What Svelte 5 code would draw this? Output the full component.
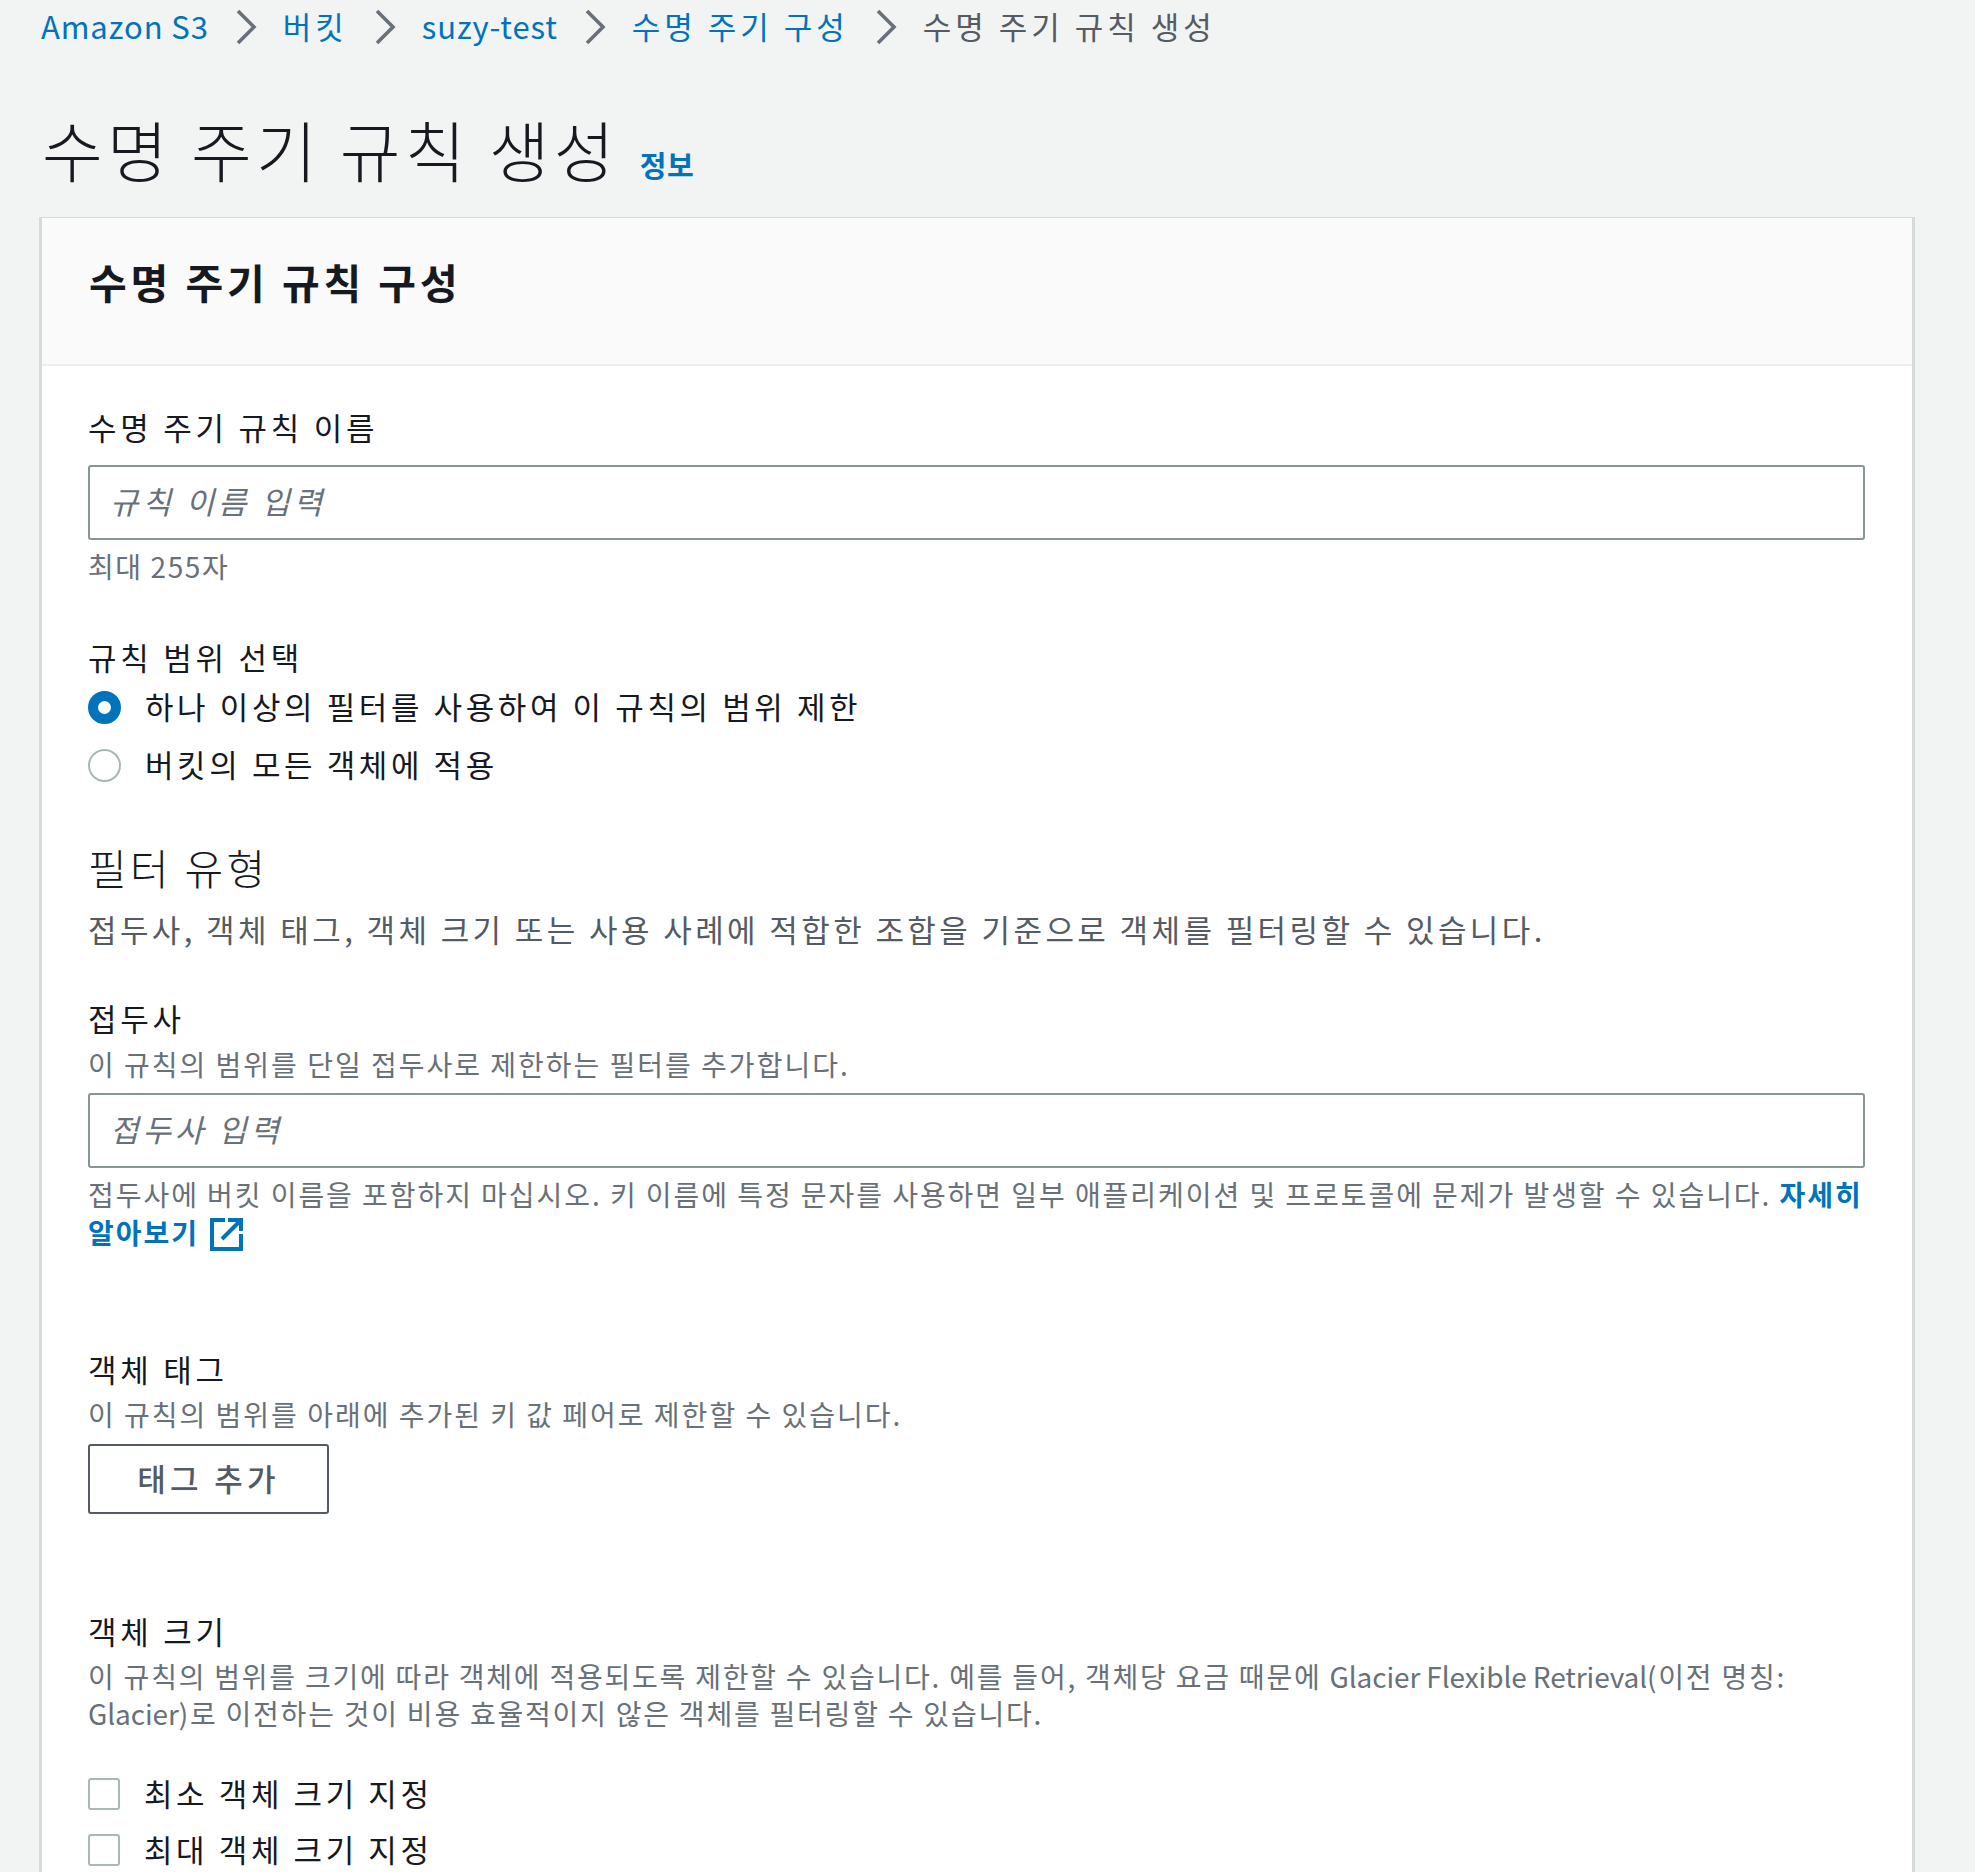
<script lang="ts">
    const crumbs = [
        { text: "Amazon S3", latin: true },
        { text: "버킷", latin: false },
        { text: "suzy-test", latin: true },
        { text: "수명 주기 구성", latin: false },
    ];
</script>

<div class="page">
    <nav class="crumbs">
        {#each crumbs as crumb}
            <a href="#top" class:latin={crumb.latin}>{crumb.text}</a>
            <svg class="sep" viewBox="0 0 22 36" width="22" height="36">
                <path d="M3 2 L19 18 L3 34" fill="none" stroke="#687078" stroke-width="3.6" />
            </svg>
        {/each}
        <span class="current">수명 주기 규칙 생성</span>
    </nav>

    <header class="title">
        <h1>수명 주기 규칙 생성</h1>
        <a class="info" href="#top">정보</a>
    </header>

    <section class="card">
        <div class="card-head">
            <h2>수명 주기 규칙 구성</h2>
        </div>
        <div class="card-body">
            <label class="label" for="name">수명 주기 규칙 이름</label>
            <input id="name" class="field" placeholder="규칙 이름 입력" />
            <p class="hint name-hint">최대 255자</p>

            <p class="label scope">규칙 범위 선택</p>
            <div class="option first">
                <span class="radio on"></span>
                <span class="opt-text">하나 이상의 필터를 사용하여 이 규칙의 범위 제한</span>
            </div>
            <div class="option second">
                <span class="radio"></span>
                <span class="opt-text">버킷의 모든 객체에 적용</span>
            </div>

            <h3>필터 유형</h3>
            <p class="lead">접두사, 객체 태그, 객체 크기 또는 사용 사례에 적합한 조합을 기준으로 객체를 필터링할 수 있습니다.</p>

            <label class="label prefix" for="prefix">접두사</label>
            <p class="hint sub">이 규칙의 범위를 단일 접두사로 제한하는 필터를 추가합니다.</p>
            <input id="prefix" class="field prefix-field" placeholder="접두사 입력" />
            <p class="hint help">
                접두사에 버킷 이름을 포함하지 마십시오. 키 이름에 특정 문자를 사용하면 일부 애플리케이션 및 프로토콜에 문제가 발생할 수 있습니다.
                <a href="#top">자세히</a><br />
                <a href="#top">알아보기
                    <svg class="ext" viewBox="0 0 33 33" width="33" height="33">
                        <path d="M15 2 H2 V31 H31 V16 M18 2 H31 V13 M30 3 L12 21" fill="none" stroke="#0073bb" stroke-width="4" />
                    </svg>
                </a>
            </p>

            <p class="label tags">객체 태그</p>
            <p class="hint tags-hint">이 규칙의 범위를 아래에 추가된 키 값 페어로 제한할 수 있습니다.</p>
            <button class="add"><span>태그 추가</span></button>

            <p class="label size">객체 크기</p>
            <p class="hint sub multi">이 규칙의 범위를 크기에 따라 객체에 적용되도록 제한할 수 있습니다. 예를 들어, 객체당 요금 때문에 <span class="plain">Glacier Flexible Retrieval</span>(이전 명칭: <span class="plain">Glacier</span>)로 이전하는 것이 비용 효율적이지 않은 객체를 필터링할 수 있습니다.</p>
            <div class="option check-first">
                <span class="check"></span>
                <span class="opt-text">최소 객체 크기 지정</span>
            </div>
            <div class="option check-second">
                <span class="check"></span>
                <span class="opt-text">최대 객체 크기 지정</span>
            </div>
        </div>
    </section>
</div>

<style>
    :global(body) {
        margin: 0;
        background: #f2f3f3;
    }

    .page {
        height: 1872px;
        overflow: hidden;
        padding: 0 60px 0 39px;
        box-sizing: border-box;
        font-family: "Noto Sans CJK KR", "Open Sans", sans-serif;
        color: #16191f;
        font-size: 31px;
        letter-spacing: 3.4px;
    }

    a {
        color: #0073bb;
        text-decoration: none;
    }

    p,
    h1,
    h2,
    h3 {
        margin: 0;
        font-weight: 400;
    }

    .crumbs {
        display: flex;
        align-items: center;
        height: 54px;
        gap: 26px;
        padding-left: 2px;
        letter-spacing: 4px;
    }

    .crumbs a,
    .current {
        margin-top: -4px;
    }

    .crumbs .latin {
        letter-spacing: 0.9px;
    }

    .current {
        color: #545b64;
    }

    .title {
        display: flex;
        align-items: baseline;
        gap: 21px;
        margin-top: 52px;
        height: 111px;
        padding-left: 3px;
    }

    h1 {
        font-size: 66px;
        line-height: 84px;
        letter-spacing: 4.3px;
        font-weight: 300;
    }

    .info {
        font-size: 29px;
        font-weight: 700;
        letter-spacing: 0.5px;
    }

    .card {
        background: #fff;
        border: solid #d5dbdb;
        border-width: 1px 3px 0;
        height: 1655px;
    }

    .card-head {
        background: #fafafa;
        border-bottom: 2px solid #eaeded;
        height: 148px;
        padding: 0 47px;
        display: flex;
        align-items: center;
        box-sizing: border-box;
    }

    h2 {
        font-size: 41px;
        font-weight: 700;
        letter-spacing: 3.9px;
        margin-top: -20px;
    }

    .card-body {
        padding: 38px 47px 0 46px;
    }

    .label {
        display: block;
        line-height: 46px;
        letter-spacing: 3.75px;
    }

    .field {
        display: block;
        width: 100%;
        box-sizing: border-box;
        height: 75px;
        border: 2px solid #879596;
        border-radius: 3px;
        padding: 0 20px 4px;
        margin-top: 15px;
        font: inherit;
        letter-spacing: 3.9px;
        background: #fff;
    }

    .field::placeholder {
        color: #687078;
        font-style: italic;
        opacity: 1;
    }

    .hint {
        color: #687078;
        font-size: 28px;
        line-height: 38px;
        letter-spacing: 2px;
    }

    .plain {
        letter-spacing: -0.1px;
    }

    .sub {
        margin-top: 4px;
    }

    .name-hint {
        margin-top: 7px;
        letter-spacing: 1.6px;
    }

    .scope {
        margin-top: 49px;
    }

    .option {
        display: flex;
        align-items: center;
        gap: 24px;
        height: 46px;
        letter-spacing: 3.6px;
    }

    .opt-text {
        margin-top: -3px;
    }

    .first {
        margin-top: 4px;
    }

    .second {
        margin-top: 12px;
    }

    .radio {
        width: 33px;
        height: 33px;
        box-sizing: border-box;
        border-radius: 50%;
        border: 2px solid #aab7b8;
        background: #fff;
        flex: none;
    }

    .radio.on {
        border: 10px solid #0073bb;
    }

    h3 {
        font-size: 42px;
        line-height: 60px;
        letter-spacing: 3.3px;
        margin-top: 49px;
        font-weight: 300;
    }

    .lead {
        color: #545b64;
        line-height: 46px;
        margin-top: 9px;
    }

    .prefix {
        margin-top: 43px;
    }

    .prefix-field {
        margin-top: 10px;
    }

    .help {
        margin-top: 7px;
        line-height: 38px;
        letter-spacing: 1.95px;
    }

    .help a {
        font-weight: 700;
    }

    .ext {
        vertical-align: -7px;
        margin-left: 3px;
    }

    .tags {
        margin-top: 95px;
    }

    .tags-hint {
        margin-top: 3px;
    }

    .add {
        display: block;
        width: 241px;
        height: 70px;
        margin-top: 11px;
        padding: 0 0 3px;
        background: #fff;
        border: 2px solid #545b64;
        border-radius: 3px;
        color: #545b64;
        font: inherit;
        font-weight: 500;
        letter-spacing: 4.3px;
    }

    .size {
        margin-top: 94px;
    }

    .multi {
        line-height: 37px;
        letter-spacing: 1.78px;
    }

    .check-first {
        margin-top: 39px;
    }

    .check-second {
        margin-top: 10px;
    }

    .check {
        width: 32px;
        height: 32px;
        box-sizing: border-box;
        border: 2px solid #aab7b8;
        border-radius: 3px;
        flex: none;
    }
</style>
